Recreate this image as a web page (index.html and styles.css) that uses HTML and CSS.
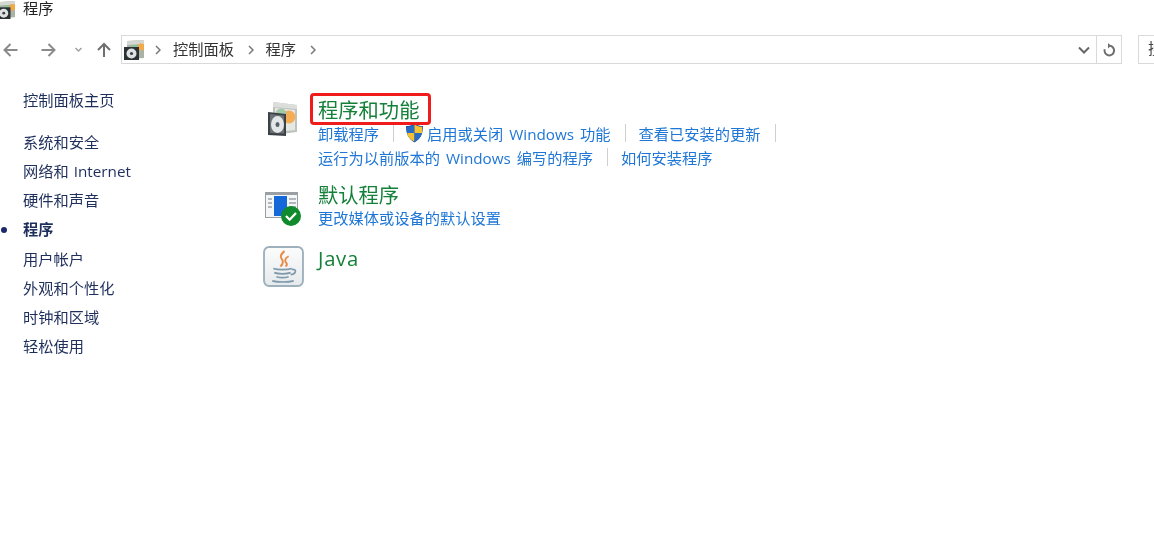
FILE: index.html
```html
<!DOCTYPE html>
<html lang="zh-CN">
<head>
<meta charset="utf-8">
<title>程序</title>
<link rel="stylesheet" href="styles.css">
</head>
<body>
<svg class="defs" width="0" height="0" aria-hidden="true">
  <defs>
    <symbol id="prog" viewBox="0 0 20 20">
      <path d="M3 1 L20 0 L20 18 L3 19Z" fill="#a9b3a6"/>
      <path d="M3 1 L20 0 L20 4 L3 5Z" fill="#d5d8d2"/>
      <circle cx="17" cy="7" r="3.600" fill="#f2a94a"/>
      <path d="M7 5 L14 5 L14 9 L7 9Z" fill="#8fbf97"/>
      <rect x="0" y="7" width="15" height="13" fill="#2c3134"/>
      <circle cx="7.500" cy="13.500" r="5" fill="#dfe2e2"/>
      <circle cx="7.500" cy="13.500" r="1.600" fill="#3a3f42"/>
    </symbol>
  </defs>
</svg>
<header class="titlebar">
  <svg class="title-icon"><use href="#prog"/></svg>
  <span>程序</span>
</header>
<nav class="toolbar">
  <svg class="nav-btn back" viewBox="0 0 16 16"><path d="M15 8H2M8 2L2 8l6 6" fill="none" stroke="#8a8a8a" stroke-width="2"/></svg>
  <svg class="nav-btn forward" viewBox="0 0 16 16"><path d="M1 8h13M8 2l6 6-6 6" fill="none" stroke="#8a8a8a" stroke-width="2"/></svg>
  <svg class="nav-btn recent" viewBox="0 0 8 6"><path d="M1 1l3 3 3-3" fill="none" stroke="#a0a0a0" stroke-width="1.500"/></svg>
  <svg class="nav-btn up" viewBox="0 0 16 16"><path d="M8 15V2M2 8l6-6 6 6" fill="none" stroke="#6f6f6f" stroke-width="2"/></svg>
  <div class="address">
    <svg class="crumb-icon"><use href="#prog"/></svg>
    <svg class="sep first" viewBox="0 0 6 10"><path d="M1 1l4 4-4 4" fill="none" stroke="#777" stroke-width="1.500"/></svg>
    <span class="crumb">控制面板</span>
    <svg class="sep" viewBox="0 0 6 10"><path d="M1 1l4 4-4 4" fill="none" stroke="#777" stroke-width="1.500"/></svg>
    <span class="crumb">程序</span>
    <svg class="sep" viewBox="0 0 6 10"><path d="M1 1l4 4-4 4" fill="none" stroke="#777" stroke-width="1.500"/></svg>
    <svg class="drop" viewBox="0 0 12 8"><path d="M1 1.500l5 5 5-5" fill="none" stroke="#666" stroke-width="2"/></svg>
    <div class="refresh">
      <svg viewBox="0 0 14 14"><path d="M6.500 2.800h1a4.800 4.800 0 1 1-4.800 3.400" fill="none" stroke="#6e6e6e" stroke-width="2"/><path d="M6 0v5.600l3-2.800z" fill="#6e6e6e"/></svg>
    </div>
  </div>
  <div class="search">搜</div>
</nav>
<div class="main">
  <aside class="side">
    <a class="side-home">控制面板主页</a>
    <a>系统和安全</a>
    <a>网络和 Internet</a>
    <a>硬件和声音</a>
    <a class="current">程序</a>
    <a>用户帐户</a>
    <a>外观和个性化</a>
    <a>时钟和区域</a>
    <a>轻松使用</a>
  </aside>
  <section class="content">
    <div class="cat cat-programs">
      <svg class="cat-icon" viewBox="0 0 32 40">
        <path d="M5 5L29 8V35L5 38Z" fill="#bfc3bf"/>
        <path d="M5 5L29 8V12L5 10Z" fill="#dcdedb"/>
        <path d="M7 11L27 13V33L7 35Z" fill="#e6e9e3"/>
        <circle cx="21" cy="20" r="6.500" fill="#f4ad55"/>
        <circle cx="13" cy="17" r="5.500" fill="#a3c9a8"/>
        <path d="M0 15L18 17V39L0 38Z" fill="#3b4144"/>
        <path d="M2 17L16 18.500V36.500L2 36Z" fill="#6b7276"/>
        <ellipse cx="9.500" cy="27.500" rx="6.500" ry="8.500" fill="#e4e7e8"/>
        <ellipse cx="9.500" cy="27.500" rx="2" ry="2.600" fill="#59606a"/>
      </svg>
      <div class="cat-body">
        <h2 class="cat-title boxed">程序和功能</h2>
        <div class="links">
          <a>卸载程序</a><i class="bar"></i>
          <svg class="shield" viewBox="0 0 18 20"><path d="M9 .5C12 2.500 14.500 3 17.500 3 17.500 11 15 16 9 19.500 3 16 .5 11 .5 3 3.500 3 6 2.500 9 .5Z" fill="#1d4f9c"/><path d="M9 1.500V10H1.500C1.300 8 1.300 5.500 1.300 3.800 4 3.800 6.500 3.300 9 1.500Z" fill="#2a6cc4"/><path d="M9 1.500C11.500 3.300 14 3.800 16.700 3.800 16.700 5.500 16.700 8 16.500 10H9Z" fill="#f6c431"/><path d="M9 10H1.600C2.300 13.800 4.500 16.800 9 18.600Z" fill="#f3c02e"/><path d="M9 10H16.400C15.700 13.800 13.500 16.800 9 18.600Z" fill="#2a6cc4"/></svg>
          <a>启用或关闭 Windows 功能</a><i class="bar"></i>
          <a>查看已安装的更新</a><i class="bar"></i>
        </div>
        <div class="links">
          <a>运行为以前版本的 Windows 编写的程序</a><i class="bar"></i>
          <a>如何安装程序</a>
        </div>
      </div>
    </div>
    <div class="cat cat-default">
      <svg class="cat-icon default-icon" viewBox="0 0 37 34">
        <rect x="0" y="0" width="33" height="26" fill="#9a9fa3"/>
        <rect x="1" y="3" width="31" height="22" fill="#f4f6f7"/>
        <rect x="9" y="4" width="13" height="20" fill="#1468d8"/>
        <path d="M3 7h4M3 11h4M3 15h4M24 7h7M24 11h7M24 15h7" stroke="#9aa3aa" stroke-width="1.500"/>
        <circle cx="26" cy="24" r="10" fill="#0f8a2c"/>
        <path d="M21 24l3.700 3.700 6.300-6.700" fill="none" stroke="#fff" stroke-width="2.300"/>
      </svg>
      <div class="cat-body">
        <h2 class="cat-title">默认程序</h2>
        <div class="links"><a>更改媒体或设备的默认设置</a></div>
      </div>
    </div>
    <div class="cat cat-java">
      <svg class="cat-icon java-icon" viewBox="0 0 40 40">
        <defs>
          <linearGradient id="javabg" x1="0" y1="0" x2="0" y2="1"><stop offset="0" stop-color="#fcfcfc"/><stop offset="1" stop-color="#e6eaec"/></linearGradient>
        </defs>
        <rect x="1" y="1" width="38" height="38" rx="5" fill="url(#javabg)" stroke="#9db0bc" stroke-width="1.800"/>
        <path d="M21 5c-5 4-4 6-2 9 1 2 0 4-2 6M25 10c-4 2-4 5-2 7 1 1 0 2-1 3" fill="none" stroke="#ea8b45" stroke-width="1.900"/>
        <path d="M10 22c4 1.500 14 1.500 18 0M11 26c4 1.500 12 1.500 16 0M13 30c4 1.200 8 1.200 12 0M9 34c5 1.500 16 1.500 21 0M28 23c5-1 5 4-1 5" fill="none" stroke="#7f9aac" stroke-width="1.700"/>
      </svg>
      <div class="cat-body"><h2 class="cat-title java-title">Java</h2></div>
    </div>
  </section>
</div>
</body>
</html>
```
FILE: styles.css
```css
* { box-sizing: border-box; }
html, body { margin: 0; height: 100%; overflow: hidden; }
body {
  width: 1154px;
  height: 538px;
  background: #fff;
  color: #333;
  font-family: "Open Sans", "Noto Sans CJK SC", sans-serif;
  font-size: 15.250px;
  filter: blur(0.45px);
}
.defs { position: absolute; }
.titlebar {
  height: 16px;
  display: flex;
  align-items: center;
  gap: 8px;
  margin-left: -3px;
  color: #222;
  line-height: 16px;
}
.title-icon { width: 18px; height: 18px; flex: none; margin-top: 3px; }
.toolbar {
  height: 29px;
  margin-top: 19px;
  display: flex;
  align-items: center;
}
.nav-btn { flex: none; }
.back { width: 17px; height: 16px; margin-left: 2px; }
.forward { width: 17px; height: 16px; margin-left: 21px; }
.recent { width: 9px; height: 6px; margin-left: 17px; }
.up { width: 16px; height: 16px; margin-left: 13px; }
.address {
  flex: none;
  width: 1001px;
  height: 29px;
  margin-left: 9px;
  border: 1px solid #d9d9d9;
  display: flex;
  align-items: center;
  color: #333;
}
.crumb-icon { width: 20px; height: 20px; margin-left: 2px; flex: none; }
.sep { width: 6px; height: 10px; flex: none; margin: 0 12px 0 13.500px; }
.sep.first { margin: 0 12px 0 11px; }
.crumb { white-space: nowrap; margin-bottom: 4px; }
.drop { width: 12px; height: 8px; margin-left: auto; margin-right: 6px; }
.refresh {
  width: 25px;
  height: 27px;
  border-left: 1px solid #d9d9d9;
  display: flex;
  align-items: center;
  justify-content: center;
}
.refresh svg { width: 14px; height: 14px; }
.search {
  width: 30px;
  height: 29px;
  margin-left: 16px;
  flex: none;
  border: 1px solid #d9d9d9;
  border-right: 0;
  overflow: hidden;
  padding-left: 9px;
  line-height: 25px;
  color: #444;
  white-space: nowrap;
}
.main { display: flex; padding-top: 26px; }
.side {
  width: 263px;
  flex: none;
  padding-left: 23px;
  display: flex;
  flex-direction: column;
  color: #1f2f5c;
  word-spacing: 1px;
}
.side a { height: 29.150px; line-height: 21px; white-space: nowrap; position: relative; }
.side .side-home { height: 42px; }
.side .current { font-weight: 700; }
.current::before {
  content: "";
  position: absolute;
  left: -22px;
  top: 8px;
  width: 6px;
  height: 6px;
  border-radius: 50%;
  background: #1a2a6a;
}
.content { display: flex; flex-direction: column; padding-top: 1px; }
.cat { display: flex; }
.cat-icon { flex: none; }
.cat-programs { height: 91px; }
.cat-programs .cat-icon { width: 32px; height: 40px; margin: 6px 18px 0 5px; }
.cat-default { height: 63px; }
.default-icon { width: 37px; height: 34px; margin: 10px 16px 0 2px; }
.java-icon { width: 41px; height: 41px; margin: 1px 14px 0 0; }
.cat-title {
  margin: 0;
  font-size: 20.300px;
  font-weight: 400;
  line-height: 26px;
  color: #15803a;
  white-space: nowrap;
}
.cat-default .cat-title { margin-bottom: -2px; }
.cat-programs .cat-title { margin: 6px 0 -2px; }
.java-title { letter-spacing: 0.700px; margin-top: 0; }
.cat-title.boxed { position: relative; width: max-content; }
.boxed::after {
  content: "";
  position: absolute;
  left: -8px;
  right: -12px;
  top: -4px;
  bottom: -2px;
  border: 3px solid #f01c1c;
  border-radius: 4px;
}
.links {
  display: flex;
  align-items: center;
  height: 24px;
  color: #1e76d6;
  white-space: nowrap;
  word-spacing: 2px;
}
.cat-default .links { height: 22px; }
.bar { width: 1px; height: 18px; background: #cfcfcf; margin: 0 13px 0 14px; }
.shield { width: 19px; height: 20px; margin: 0 3px 0 -2px; flex: none; }
```
